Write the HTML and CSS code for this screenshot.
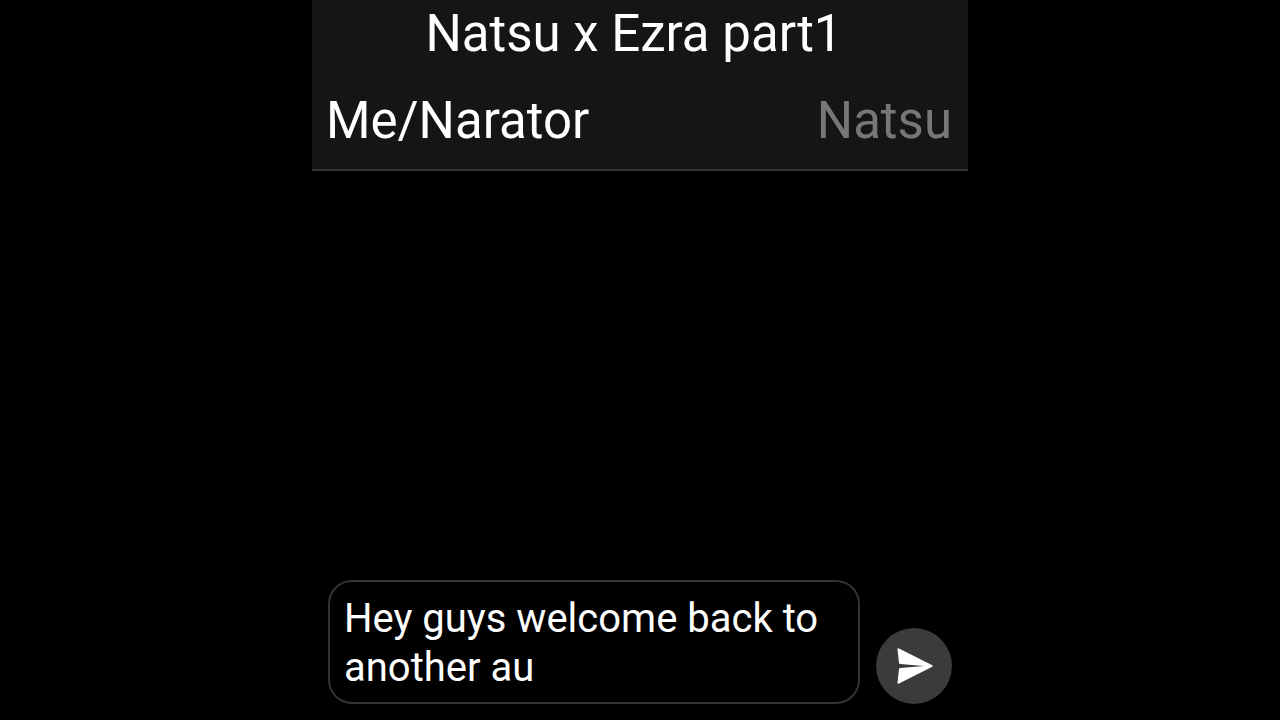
FILE: index.html
```html
<!DOCTYPE html>
<html lang="en">
<head>
    <meta charset="UTF-8">
    <meta name="viewport" content="width=device-width, initial-scale=1.0">
    <title>Natsu x Ezra part1</title>
    <link rel="stylesheet" href="styles.css">
</head>
<body>

<div class="chat">

    <!-- Title and speakers -->
    <header class="chat-header">
        <h1 class="title">Natsu x Ezra part1</h1>
        <div class="speakers">
            <button class="speaker active" type="button">Me/Narator</button>
            <button class="speaker" type="button">Natsu</button>
        </div>
    </header>

    <main class="messages"></main>

    <!-- Message box -->
    <form class="composer">
        <textarea class="message-input" rows="2" aria-label="Message">Hey guys welcome back to another au</textarea>
        <button class="send-btn" type="button" aria-label="Send">
            <svg class="send-icon" viewBox="0 0 38 36" aria-hidden="true">
                <path d="M4 0.4 L36.8 17 Q38.6 18 36.8 19 L4 35.6 Q2.4 36.2 2.5 34.6 L4 21 Q4.2 20 5.2 19.9 L29 18 L5.2 16.1 Q4.2 16 4 15 L2.5 1.4 Q2.4 -0.2 4 0.4 Z"/>
            </svg>
        </button>
    </form>

</div>

</body>
</html>
```
FILE: styles.css
```css
/* General Styles */
* {
    margin: 0;
    padding: 0;
    box-sizing: border-box;
    font-family: Roboto, "Liberation Sans", sans-serif;
}

body {
    background: #000;
    color: #fff;
}

.chat {
    display: flex;
    flex-direction: column;
    width: 100%;
    max-width: 656px;
    min-height: 100vh;
    margin: 0 auto;
}

/* Header */
.chat-header {
    background: #151515;
    border-bottom: 2px solid #333;
    padding-bottom: 14px;
}

.title {
    font-size: 51px;
    font-weight: 400;
    line-height: 68px;
    text-align: center;
    padding-right: 12px;
}

.speakers {
    display: flex;
    justify-content: space-between;
    padding: 19px 16px 0 14px;
}

.speaker {
    background: none;
    border: none;
    color: #777;
    font-size: 51px;
    line-height: 68px;
    cursor: pointer;
}

.speaker.active {
    color: #fff;
}

/* Messages */
.messages {
    flex: 1;
}

/* Composer */
.composer {
    display: flex;
    align-items: flex-end;
    gap: 16px;
    padding: 16px;
}

.message-input {
    flex: 1;
    min-width: 0;
    background: #000;
    border: 2px solid #333;
    border-radius: 24px;
    color: #fff;
    font-size: 40px;
    line-height: 49px;
    padding: 12px 14px 10px;
    resize: none;
    outline: none;
    overflow: hidden;
}

.send-btn {
    display: flex;
    align-items: center;
    justify-content: center;
    width: 76px;
    height: 76px;
    background: #3b3b3b;
    border: none;
    border-radius: 50%;
    cursor: pointer;
}

.send-icon {
    width: 38px;
    height: 36px;
    fill: #fff;
}
```
